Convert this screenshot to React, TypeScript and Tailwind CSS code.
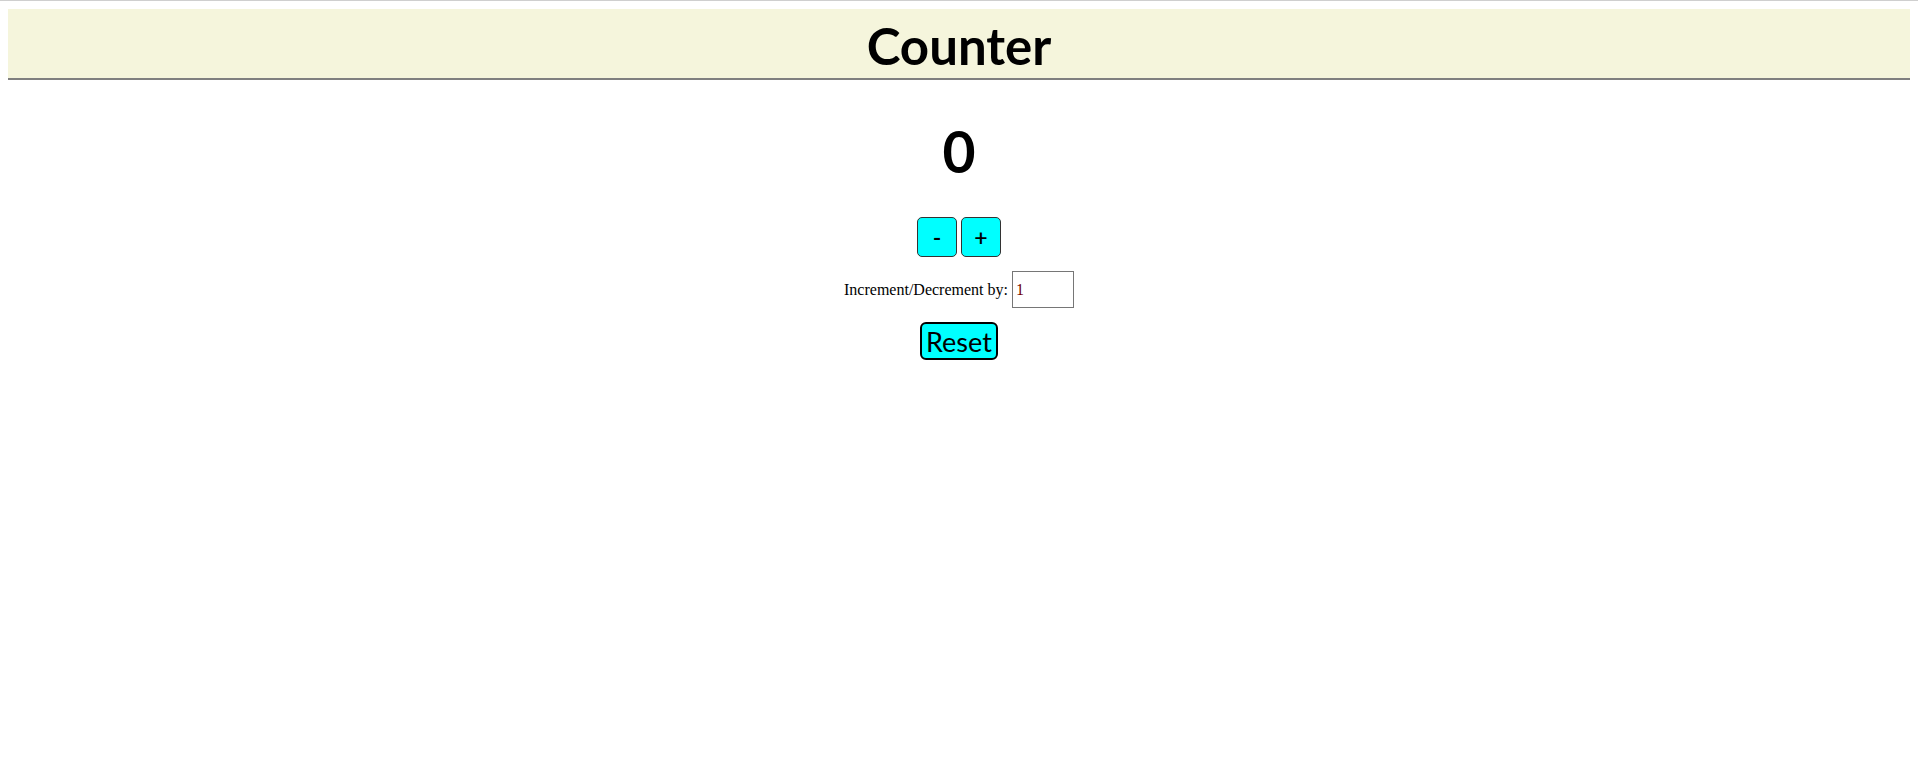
import React, { useState } from "react";

export default function App() {
  const [count, setCount] = useState(0);
  const [step, setStep] = useState("1");

  const amount = Number(step) || 0;

  return (
    <div className="min-h-screen bg-white border-t border-[#cfcfcf] px-2 pt-2 font-['Comic_Sans_MS',Lato,sans-serif] text-black">
      <header className="h-[71px] pt-[4px] bg-[#f5f5dc] border-b-2 border-[#7f7f7f] flex items-center justify-center">
        <h1 className="text-[51px] font-bold leading-none">Counter</h1>
      </header>

      <main className="flex flex-col items-center">
        <div className="mt-[39px] h-[64px] flex items-center text-[57px] font-bold leading-none">
          {count}
        </div>

        {/* - / + buttons */}
        <div className="mt-[34px] flex gap-[4px]">
          <button
            className="w-[40px] h-[40px] bg-[#00ffff] border border-[#333] rounded-[5px] text-[23px] font-semibold leading-none"
            onClick={() => setCount(count - amount)}
          >
            -
          </button>
          <button
            className="w-[40px] h-[40px] bg-[#00ffff] border border-[#333] rounded-[5px] text-[23px] font-semibold leading-none"
            onClick={() => setCount(count + amount)}
          >
            +
          </button>
        </div>

        <div className="mt-[14px] flex items-baseline gap-[4px] font-['Liberation_Serif',serif] text-[16px]">
          <label htmlFor="step">Increment/Decrement by:</label>
          <input
            id="step"
            type="text"
            value={step}
            onChange={(e) => setStep(e.target.value)}
            className="w-[62px] h-[37px] border border-[#767676] px-[3px] text-[16px] text-[#700000] font-['Liberation_Serif',serif] outline-none"
          />
        </div>

        <button
          className="mt-[14px] w-[78px] h-[38px] bg-[#00ffff] border-2 border-black rounded-[6px] text-[27px] leading-none"
          onClick={() => setCount(0)}
        >
          Reset
        </button>
      </main>
    </div>
  );
}
